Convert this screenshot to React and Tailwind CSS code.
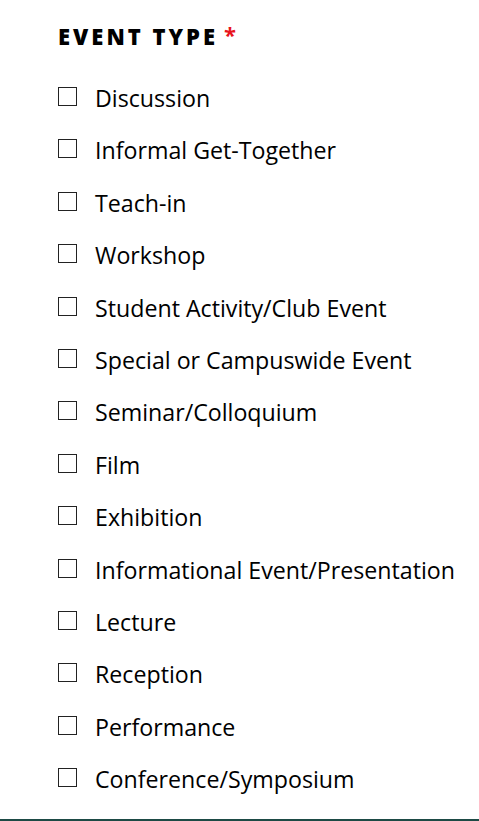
const options = [
  'Discussion',
  'Informal Get-Together',
  'Teach-in',
  'Workshop',
  'Student Activity/Club Event',
  'Special or Campuswide Event',
  'Seminar/Colloquium',
  'Film',
  'Exhibition',
  'Informational Event/Presentation',
  'Lecture',
  'Reception',
  'Performance',
  'Conference/Symposium',
];

export default function App() {
  return (
    <div className="w-[479px] h-[821px] bg-white flex flex-col font-['Open_Sans','Liberation_Sans',sans-serif] text-black">
      <div className="flex-1 pl-[58px] pt-[22px]">
        <h2 className="text-[22px] font-extrabold tracking-[3px] leading-[28px] flex items-start">
          EVENT TYPE
          <span className="text-[#e8141c] ml-[6px] text-[22px] leading-[24px] font-bold">*</span>
        </h2>
        <ul className="mt-[34px] flex flex-col gap-[24.4px]">
          {options.map((o) => (
            <li key={o} className="flex items-center h-[28px]">
              <span className="w-[19px] h-[19px] border border-[#222] bg-white shrink-0 -mt-[3px]" />
              <span className="ml-[18px] text-[23.2px] leading-[28px]">{o}</span>
            </li>
          ))}
        </ul>
      </div>
      <div className="h-[2px] bg-[#1d4a45]" />
    </div>
  );
}
